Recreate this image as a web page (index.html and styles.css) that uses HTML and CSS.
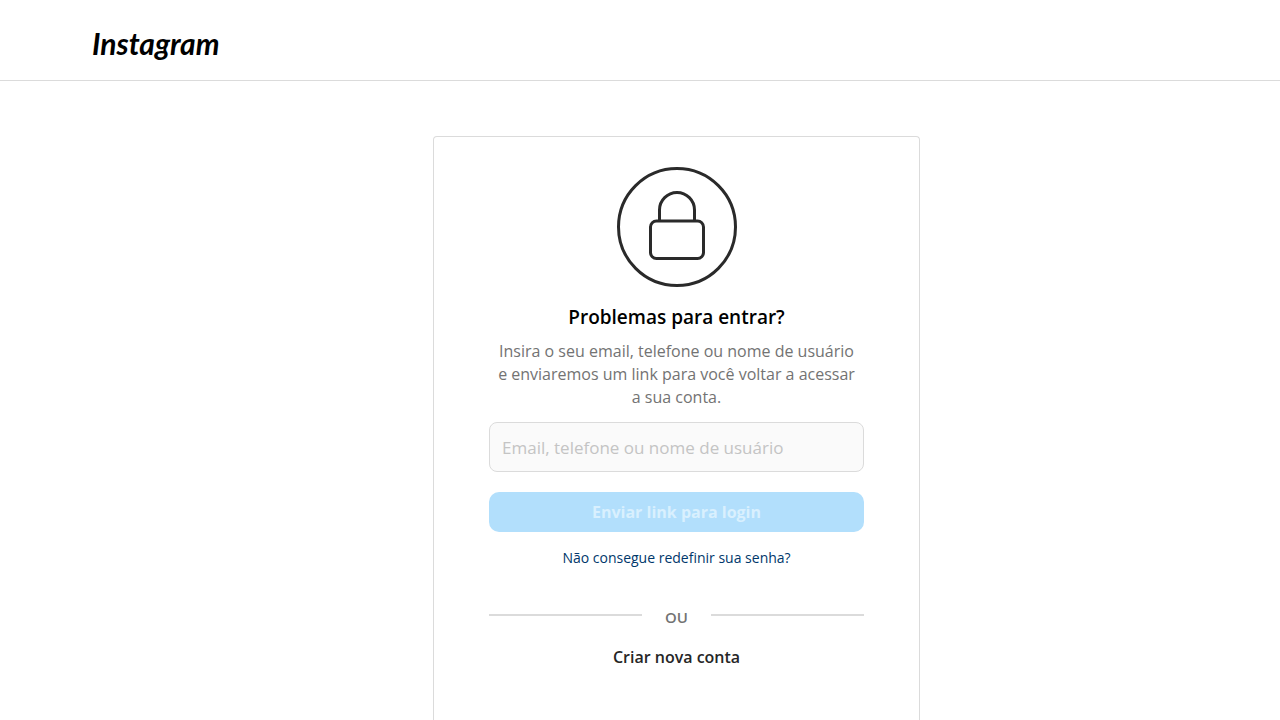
FILE: index.html
```html
<!DOCTYPE html>
<html lang="pt-br">
<head>
  <meta charset="UTF-8">
  <meta name="viewport" content="width=device-width, initial-scale=1.0">
  <title>Instagram</title>

  <link rel="stylesheet" href="styles.css">

</head>
<body>
  <header class="header">
    <a class="logo" href="#">Instagram</a>
  </header>

  <main class="main">
    <form class="card">
      <svg class="lock" viewBox="0 0 120 120" aria-hidden="true">
        <circle cx="60" cy="60" r="58.5"/>
        <rect x="33.5" y="54" width="53" height="37.5" rx="6"/>
        <path d="M42.5 54V43a17.500 17.500 0 0 1 35 0V54"/>
      </svg>

      <h1 class="title">Problemas para entrar?</h1>
      <p class="text">Insira o seu email, telefone ou nome de usuário e enviaremos um link para você voltar a acessar a sua conta.</p>

      <input class="field" type="text" id="login" aria-label="Email, telefone ou nome de usuário" placeholder="Email, telefone ou nome de usuário">
      <button class="btn" type="button">Enviar link para login</button>
      <a class="help" href="#">Não consegue redefinir sua senha?</a>

      <div class="divider">
        <span>OU</span>
      </div>

      <a class="create" href="#">Criar nova conta</a>
    </form>
  </main>
</body>
</html>
```

FILE: styles.css
```css
* {
  margin: 0;
  padding: 0;
  box-sizing: border-box;
}

body {
  display: flex;
  flex-direction: column;
  min-height: 100vh;
  background-color: #fff;
  font-family: "Open Sans", "Noto Sans", sans-serif;
}

a {
  text-decoration: none;
}

.header {
  display: flex;
  align-items: center;
  min-height: 81px;
  padding: 6px 92px 0;
  border-bottom: 1px solid #dbdbdb;
}

.logo {
  color: #000;
  font-family: Lato, sans-serif;
  font-size: 30px;
  font-style: italic;
  font-weight: 700;
  line-height: 36px;
}

.main {
  flex: 1;
  display: flex;
  justify-content: center;
  padding: 55px 0 0 73px;
}

/* the card runs down to the end of the page */
.card {
  display: flex;
  flex-direction: column;
  align-items: center;
  width: 100%;
  max-width: 487px;
  padding: 30px 55px 50px;
  border: 1px solid #dbdbdb;
  border-bottom: none;
  border-radius: 4px 4px 0 0;
  text-align: center;
}

.lock {
  width: 120px;
  height: 120px;
  fill: none;
  stroke: #2a2a2a;
  stroke-width: 3;
}

.title {
  margin-top: 18px;
  color: #000;
  font-size: 19px;
  font-weight: 600;
  line-height: 24px;
}

.text {
  margin-top: 11px;
  padding: 0 5px;
  color: #737373;
  font-size: 16px;
  line-height: 23px;
}

.field {
  width: 100%;
  height: 50px;
  margin-top: 13px;
  padding: 0 12px;
  border: 1px solid #dbdbdb;
  border-radius: 8px;
  background-color: #fafafa;
  font-family: inherit;
  font-size: 17px;
}

.field::placeholder {
  color: #c4c4c4;
  opacity: 1;
}

.btn {
  width: 100%;
  height: 40px;
  margin-top: 20px;
  border: none;
  border-radius: 10px;
  background-color: #b2dffc;
  color: #d9f0fe;
  font-family: inherit;
  font-size: 16px;
  font-weight: 700;
}

.help {
  margin-top: 16px;
  color: #00376b;
  font-size: 14px;
  line-height: 20px;
}

.divider {
  display: flex;
  align-items: center;
  gap: 23px;
  width: 100%;
  margin-top: 35px;
}

.divider::before,
.divider::after {
  content: "";
  flex: 1;
  height: 2px;
  background-color: #dbdbdb;
}

.divider span {
  padding-top: 4px;
  color: #737373;
  font-size: 15px;
  font-weight: 600;
  line-height: 20px;
}

.create {
  margin-top: 18px;
  color: #262626;
  font-size: 16px;
  font-weight: 600;
  line-height: 24px;
}
```
